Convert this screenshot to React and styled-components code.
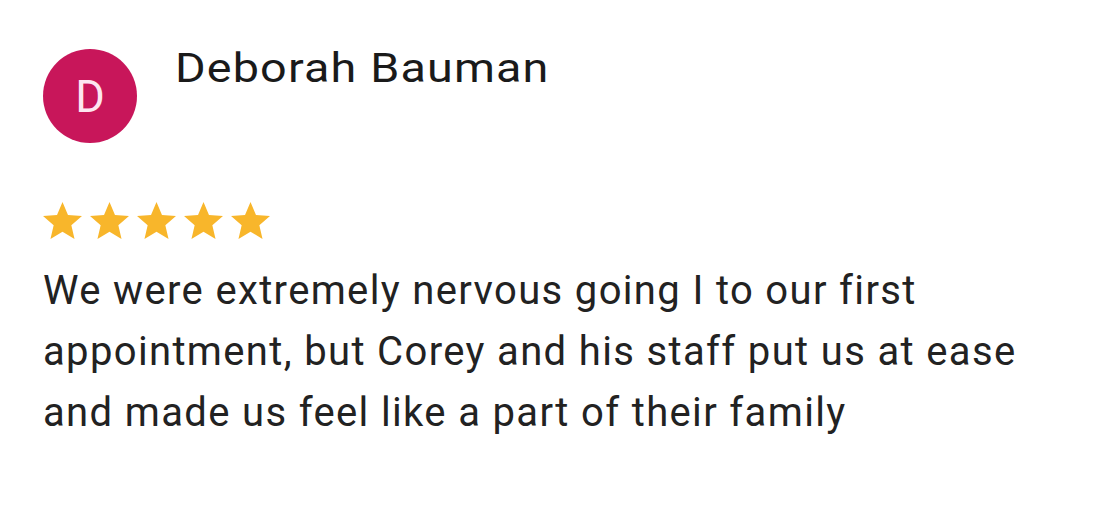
import styled, { createGlobalStyle } from 'styled-components';

const GlobalStyle = createGlobalStyle`
  html, body {
    margin: 0;
    padding: 0;
    background: #ffffff;
  }
  body {
    font-family: Roboto, "Noto Sans", Arial, sans-serif;
    color: #1f1f1f;
  }
`;

const Card = styled.div`
  width: 1110px;
  height: 506px;
  box-sizing: border-box;
  padding: 49px 0 0 43px;
  display: flex;
  flex-direction: column;
`;

const Header = styled.div`
  display: flex;
  align-items: flex-start;
  gap: 38px;
`;

const Avatar = styled.div`
  width: 94px;
  height: 94px;
  border-radius: 50%;
  background: #c8165a;
  color: #fde6f0;
  display: flex;
  align-items: center;
  justify-content: center;
  font-size: 45px;
  line-height: 1;
  flex-shrink: 0;
`;

const Name = styled.div`
  font-size: 41px;
  line-height: 44px;
  letter-spacing: 1px;
  color: #1a1a1a;
  margin-top: -3px;
  transform: scaleX(1.14);
  transform-origin: left center;
`;

const Stars = styled.div`
  display: flex;
  gap: 8px;
  margin-top: 59px;
`;

const Body = styled.p`
  margin: 21px 0 0;
  font-size: 40px;
  line-height: 61px;
  letter-spacing: 1.35px;
  color: #222222;
`;

function Star() {
  return (
    <svg width="39" height="37" viewBox="2 2 20 19">
      <path
        d="M12 17.27L18.18 21l-1.64-7.03L22 9.24l-7.19-.61L12 2 9.19 8.63 2 9.24l5.46 4.73L5.82 21z"
        fill="#f8b62b"
      />
    </svg>
  );
}

export default function App() {
  return (
    <>
      <GlobalStyle />
      <Card>
        <Header>
          <Avatar>D</Avatar>
          <Name>Deborah Bauman</Name>
        </Header>
        <Stars>
          {[0, 1, 2, 3, 4].map((i) => (
            <Star key={i} />
          ))}
        </Stars>
        <Body>
          We were extremely nervous going I to our first<br />
          appointment, but Corey and his staff put us at ease<br />
          and made us feel like a part of their family
        </Body>
      </Card>
    </>
  );
}
